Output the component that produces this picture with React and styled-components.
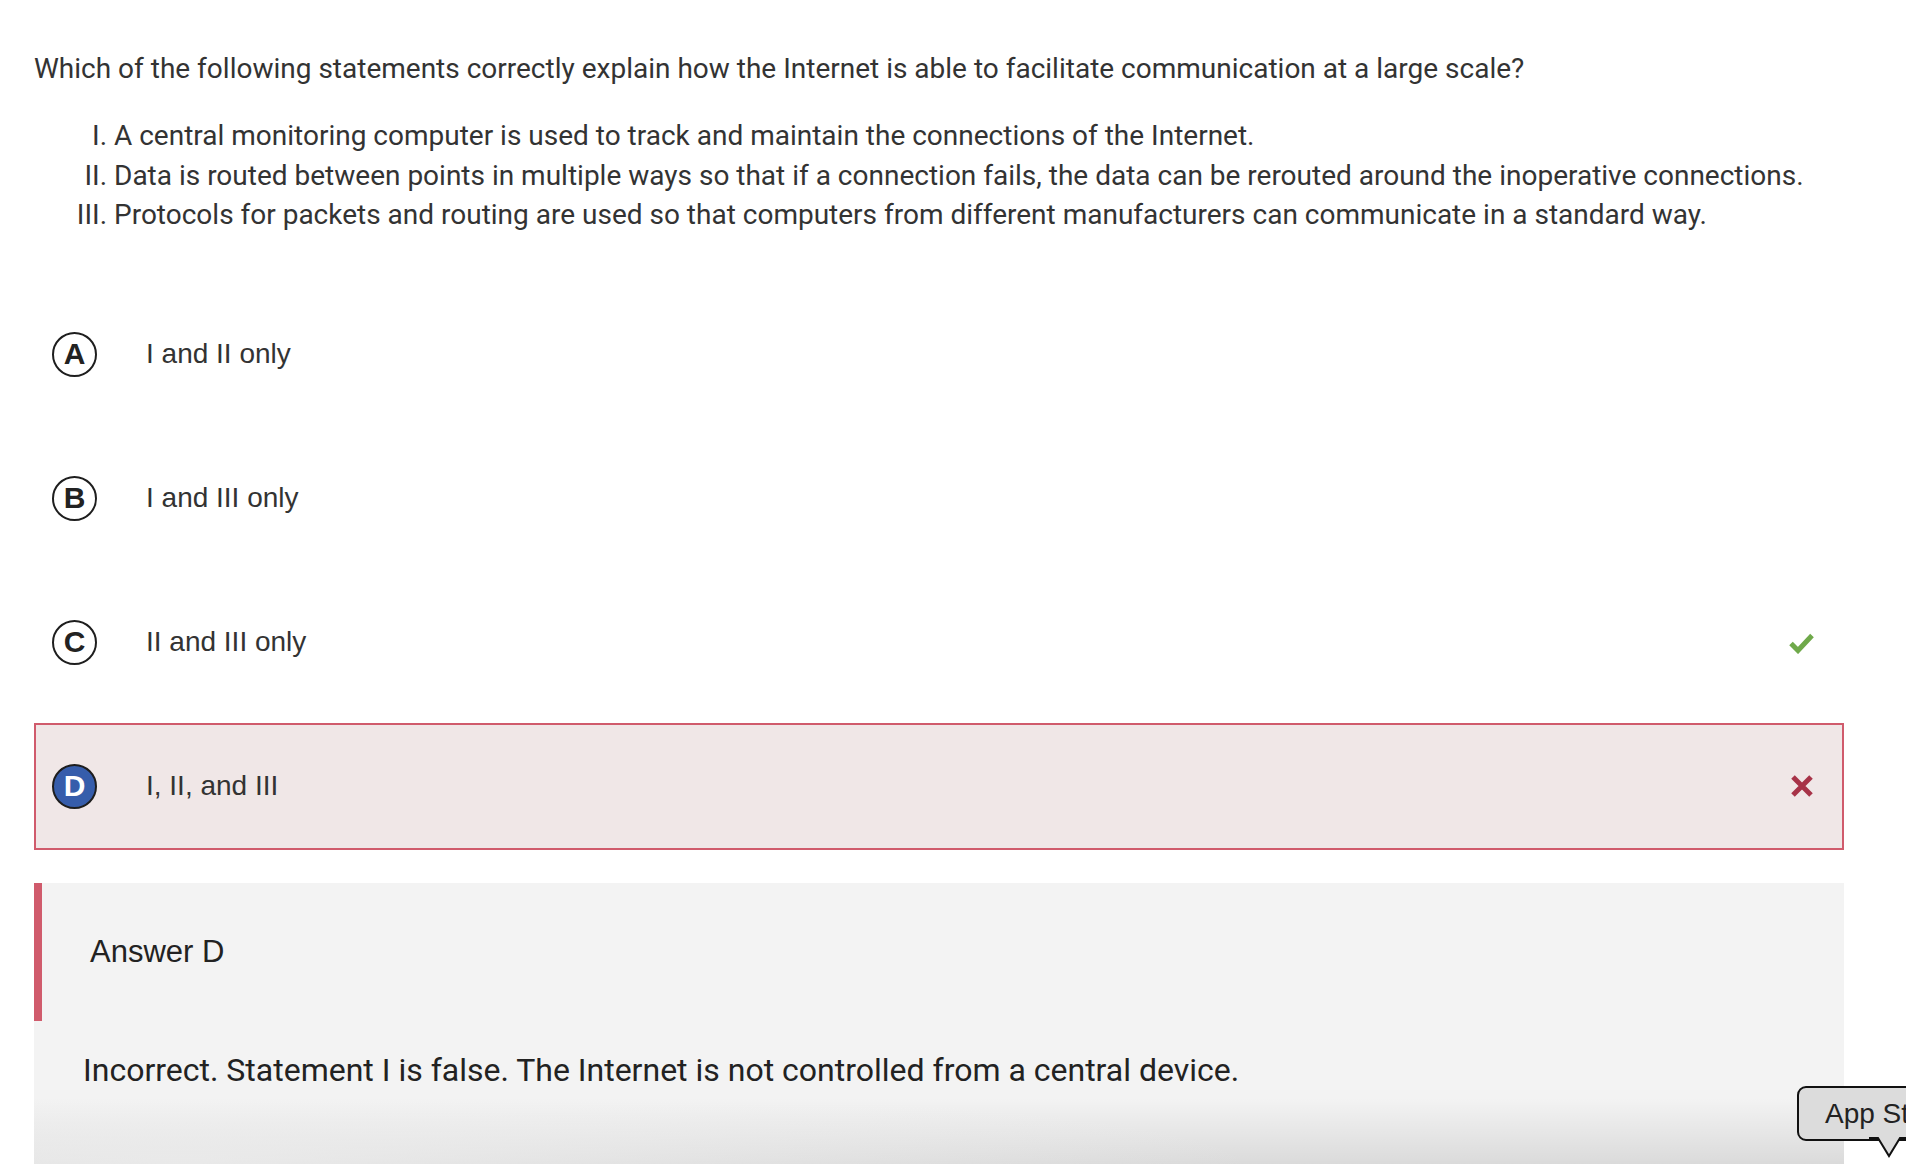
import React from 'react';
import styled, { createGlobalStyle } from 'styled-components';

const GlobalStyle = createGlobalStyle`
    html, body {
        margin: 0;
        padding: 0;
        background: #fff;
        overflow: hidden;
    }
    body {
        width: 1906px;
        height: 1164px;
        position: relative;
    }
`;

const statements = [
    'A central monitoring computer is used to track and maintain the connections of the Internet.',
    'Data is routed between points in multiple ways so that if a connection fails, the data can be rerouted around the inoperative connections.',
    'Protocols for packets and routing are used so that computers from different manufacturers can communicate in a standard way.',
];

const options = [
    { letter: 'A', text: 'I and II only' },
    { letter: 'B', text: 'I and III only' },
    { letter: 'C', text: 'II and III only', correct: true },
    { letter: 'D', text: 'I, II, and III', chosen: true },
];

const CheckIcon = () => (
    <svg width="27" height="23" viewBox="0 0 27 23">
        <polyline points="3,12.5 10,19.5 24,4.5" fill="none" stroke="#6fa94a" strokeWidth="5" />
    </svg>
);

const CrossIcon = () => (
    <svg width="24" height="24" viewBox="0 0 24 24">
        <path d="M3 3 L21 21 M21 3 L3 21" stroke="#a73348" strokeWidth="5" />
    </svg>
);

const App = () => {
    return (
        <>
            <GlobalStyle />
            <Page>
                <Question>
                    Which of the following statements correctly explain how the Internet is able to facilitate communication at a large scale?
                </Question>
                <Statements>
                    {statements.map((s) => (
                        <li key={s}>{s}</li>
                    ))}
                </Statements>
                <Options>
                    {options.map((o) => (
                        <Option key={o.letter} $chosen={o.chosen}>
                            <Letter $chosen={o.chosen}>{o.letter}</Letter>
                            <OptionText>{o.text}</OptionText>
                            <Mark>
                                {o.correct && <CheckIcon />}
                                {o.chosen && <CrossIcon />}
                            </Mark>
                        </Option>
                    ))}
                </Options>
                <Feedback>
                    <FeedbackHead>Answer D</FeedbackHead>
                    <FeedbackBody>
                        Incorrect. Statement I is false. The Internet is not controlled from a central device.
                    </FeedbackBody>
                </Feedback>
            </Page>
            <Bubble>
                App Store
                <Tail width="40" height="22" viewBox="0 0 40 22">
                    <path d="M0 1 L9 1 L20 19 L31 1 L40 1" fill="#dcdcdc" stroke="#111" strokeWidth="2" />
                </Tail>
            </Bubble>
        </>
    );
};

const Page = styled.div`
    width: 1810px;
    padding: 49px 0 0 34px;
`;

const Question = styled.p`
    margin: 0;
    font-family: Roboto, sans-serif;
    font-size: 28px;
    line-height: 39px;
    color: #333;
`;

const Statements = styled.ol`
    list-style-type: upper-roman;
    margin: 28px 0 0;
    padding-left: 80px;
    font-family: Roboto, sans-serif;
    font-size: 28px;
    line-height: 39.5px;
    color: #333;
`;

const Options = styled.div`
    display: flex;
    flex-direction: column;
    gap: 17px;
    margin-top: 56px;
`;

const Option = styled.div`
    display: flex;
    align-items: center;
    height: 127px;
    box-sizing: border-box;
    padding: 0 27px 0 16px;
    border: 2px solid ${(p) => (p.$chosen ? '#d05b6c' : 'transparent')};
    background: ${(p) => (p.$chosen ? '#f0e7e7' : 'transparent')};
`;

const Letter = styled.div`
    width: 45px;
    height: 45px;
    box-sizing: border-box;
    border-radius: 50%;
    border: 2px solid #1e1e1e;
    display: flex;
    align-items: center;
    justify-content: center;
    font-family: 'Liberation Sans', Arial, sans-serif;
    font-weight: bold;
    font-size: 30px;
    color: ${(p) => (p.$chosen ? '#fff' : '#222')};
    background: ${(p) => (p.$chosen ? '#365dab' : 'transparent')};
`;

const OptionText = styled.div`
    flex: 1;
    margin-left: 49px;
    font-family: 'Liberation Sans', Arial, sans-serif;
    font-size: 28px;
    color: #333;
`;

const Mark = styled.div`
    width: 27px;
    display: flex;
    justify-content: center;
`;

const Feedback = styled.div`
    margin-top: 33px;
    height: 281px;
    background-color: #f3f3f3;
    background-image:
        radial-gradient(ellipse 60% 90px at 8% 100%, rgba(243, 243, 243, 0.6), rgba(243, 243, 243, 0)),
        linear-gradient(to bottom, rgba(0, 0, 0, 0) 215px, rgba(0, 0, 0, 0.1) 281px);
`;

const FeedbackHead = styled.div`
    height: 138px;
    display: flex;
    align-items: center;
    border-left: 8px solid #d05b6c;
    padding-left: 48px;
    font-family: 'Liberation Sans', Arial, sans-serif;
    font-size: 31px;
    color: #222;
`;

const FeedbackBody = styled.p`
    margin: 29px 0 0;
    padding-left: 49px;
    font-family: Roboto, sans-serif;
    font-size: 32px;
    line-height: 40px;
    color: #222;
`;

const Bubble = styled.div`
    position: absolute;
    left: 1797px;
    top: 1086px;
    height: 55px;
    box-sizing: border-box;
    padding: 0 0 0 26px;
    width: 180px;
    border: 2px solid #111;
    border-radius: 9px;
    background: #dcdcdc;
    display: flex;
    align-items: center;
    font-family: 'Liberation Sans', Arial, sans-serif;
    font-size: 28px;
    color: #222;
    white-space: nowrap;
`;

const Tail = styled.svg`
    position: absolute;
    left: 70px;
    bottom: -20px;
`;

export default App;
